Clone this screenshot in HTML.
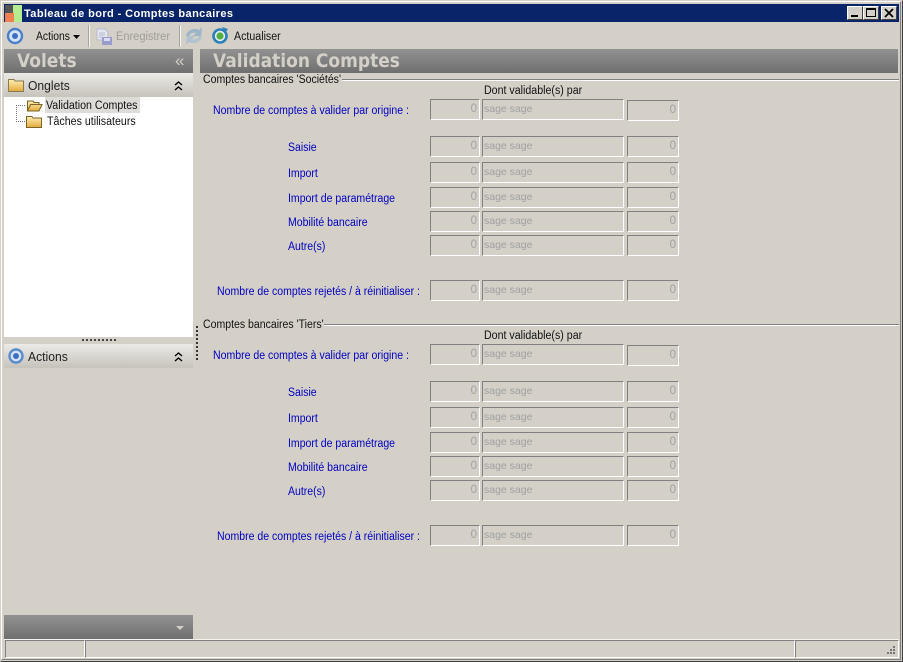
<!DOCTYPE html>
<html><head><meta charset="utf-8"><style>
html,body{margin:0;padding:0;width:903px;height:662px;overflow:hidden;background:#d4d0c8;font-family:"Liberation Sans",sans-serif;font-size:12px}
.a{position:absolute}
.t{position:absolute;white-space:nowrap;line-height:14px;height:14px;transform-origin:0 50%}
.s{transform:scaleX(.925)}
.l{color:#0000c0;font-size:11.5px;transform:scaleX(.915)}
.f{position:absolute;box-sizing:border-box;height:21px;border:1px solid;border-color:#808080 #fff #fff #808080;color:#a0a0a0;font-size:10.5px;line-height:19px;padding:0 2px 0 1px;background:#d4d0c8}
.n{text-align:right;font-size:11.5px}
.h{position:absolute;background:linear-gradient(#929292,#6f6f6f)}
.hd{position:absolute;color:#d4d0c8;font-weight:bold;font-size:19px;line-height:24px;white-space:nowrap;font-family:"DejaVu Sans",sans-serif;transform:scaleX(.897);transform-origin:0 50%}
.p{position:absolute;background:linear-gradient(#eceae6,#c6c3bb)}
.b{position:absolute;top:6px;width:16px;height:14px;box-sizing:border-box;background:#d4d0c8;border:1px solid;border-color:#fff #404040 #404040 #fff}
</style></head><body>
<div class="a" style="left:0;top:0;width:903px;height:662px;box-sizing:border-box;border:1px solid #404040;border-top-color:#d4d0c8;border-left-color:#d4d0c8"></div>
<div class="a" style="left:1px;top:1px;width:900px;height:659px;box-sizing:border-box;border:1px solid #fff;border-right-color:#808080;border-bottom-color:#808080"></div>

<!-- title -->
<div class="a" style="left:4px;top:4px;width:895px;height:18px;background:#0a246a"></div>
<svg class="a" style="left:5px;top:5px" width="17" height="17"><rect width="17" height="17" fill="#555"/><rect x="8" width="9" height="17" fill="#b5ec8f"/><rect y="8" width="9" height="9" fill="#f08050"/></svg>
<div class="t" style="left:24px;top:7px;color:#fff;font-weight:bold;font-size:11px;letter-spacing:0.4px">Tableau de bord - Comptes bancaires</div>
<div class="b" style="left:847px"><div class="a" style="left:3px;bottom:2px;width:7px;height:2px;background:#000"></div></div>
<div class="b" style="left:863px"><div class="a" style="left:2px;top:1px;width:10px;height:9px;box-sizing:border-box;border:1px solid #000;border-top-width:2px"></div></div>
<div class="b" style="left:881px"><svg class="a" style="left:2px;top:1px" width="10" height="10"><path d="M1 1L9 9M9 1L1 9" stroke="#000" stroke-width="1.8"/></svg></div>

<!-- toolbar -->
<svg class="a" style="left:6px;top:27px" width="18" height="18"><circle cx="9" cy="9" r="7" fill="#d8e4f4" stroke="#4a80c8" stroke-width="2.4"/><circle cx="9" cy="9" r="3" fill="#3d6fc0"/></svg>
<div class="t" style="left:36px;top:30px;font-size:11.5px;color:#111;transform:scaleX(.9)">Actions</div>
<svg class="a" style="left:73px;top:35px" width="8" height="5"><path d="M0 0H7L3.5 4Z" fill="#000"/></svg>
<div class="a" style="left:88px;top:25px;width:1px;height:22px;background:#a8a59d"></div><div class="a" style="left:89px;top:25px;width:1px;height:22px;background:#f4f4f4"></div>
<svg class="a" style="left:96px;top:28px" width="17" height="18"><path d="M1 1H9L12 4V12H1Z" fill="#e6e6ee" stroke="#b4bccc"/><path d="M3 5H9M3 7H9M3 9H6" stroke="#b4bccc"/><rect x="6" y="9" width="10" height="8" fill="#9a9ccc"/><rect x="8" y="10" width="6" height="3" fill="#dcdcf0"/></svg>
<div class="t" style="left:116px;top:30px;font-size:11.5px;color:#a09d95;transform:scaleX(.96)">Enregistrer</div>
<div class="a" style="left:179px;top:25px;width:1px;height:22px;background:#a8a59d"></div><div class="a" style="left:180px;top:25px;width:1px;height:22px;background:#f4f4f4"></div>
<svg class="a" style="left:185px;top:26px" width="18" height="20"><path d="M1 10C2 4 9 1 14 4L17 1L16 10H8L11 7C8 6 5 7 4 10Z" fill="#9cb4c8"/><path d="M17 10C16 16 9 19 4 16L1 19L2 10H10L7 13C10 14 13 13 14 10Z" fill="#b0c2d0"/></svg>
<svg class="a" style="left:211px;top:27px" width="18" height="18"><circle cx="9" cy="9" r="6.5" fill="#e8eef4" stroke="#2d7fb8" stroke-width="2.6"/><circle cx="9" cy="9" r="3.6" fill="#4fb03c"/><path d="M11 0L17 2L14 6Z" fill="#2d7fb8"/></svg>
<div class="t s" style="left:234px;top:30px;font-size:11.5px;color:#111">Actualiser</div>

<!-- left panel -->
<div class="h" style="left:4px;top:49px;width:189px;height:24px"></div>
<div class="hd" style="left:17px;top:49px">Volets</div>
<div class="t" style="left:175px;top:54px;color:#d4d0c8;font-size:17px">«</div>

<div class="p" style="left:4px;top:73px;width:189px;height:24px"></div>
<svg class="a" style="left:8px;top:78px" width="16" height="14"><defs><linearGradient id="g" x1="0" y1="0" x2="0" y2="1"><stop offset="0" stop-color="#fff0b4"/><stop offset="1" stop-color="#e2aa3c"/></linearGradient></defs><path d="M.5 13.500V1.500H6L7 3H15.500V13.500Z" fill="url(#g)" stroke="#8a7a50"/></svg>
<div class="t" style="left:28px;top:79px;font-size:12.5px;color:#222;transform:scaleX(.97)">Onglets</div>
<svg class="a" style="left:174px;top:81px" width="9" height="10"><path d="M1 4L4.500 1L8 4M1 9L4.500 6L8 9" fill="none" stroke="#000" stroke-width="1.4"/></svg>

<div class="a" style="left:4px;top:97px;width:189px;height:240px;background:#fff"></div>
<div class="a" style="left:45px;top:97px;width:95px;height:16px;background:#dedcd8"></div>
<div class="a" style="left:16px;top:105px;width:1px;height:16px;background:repeating-linear-gradient(#777 0 1px,transparent 1px 2px)"></div>
<div class="a" style="left:16px;top:105px;width:10px;height:1px;background:repeating-linear-gradient(90deg,#777 0 1px,transparent 1px 2px)"></div>
<div class="a" style="left:16px;top:121px;width:10px;height:1px;background:repeating-linear-gradient(90deg,#777 0 1px,transparent 1px 2px)"></div>
<svg class="a" style="left:26px;top:99px" width="17" height="13"><path d="M1.500 12V2H7L8 3.500H13V5.500H16L13 12Z" fill="url(#g)" stroke="#7a6428"/><path d="M1.500 12L4.500 5.500H16" fill="none" stroke="#7a6428"/></svg>
<svg class="a" style="left:26px;top:115px" width="16" height="13"><path d="M.5 12.500V1.500H6L7 3H15.500V12.500Z" fill="url(#g)" stroke="#7a6428"/></svg>
<div class="t s" style="left:46px;top:99px;font-size:11.5px;color:#111">Validation Comptes</div>
<div class="t s" style="left:47px;top:115px;font-size:11.5px;color:#111">Tâches utilisateurs</div>

<div class="a" style="left:82px;top:339px;width:34px;height:2px;background:repeating-linear-gradient(90deg,#444 0 2px,transparent 2px 4px)"></div>
<div class="p" style="left:4px;top:344px;width:189px;height:24px"></div>
<svg class="a" style="left:7px;top:347px" width="18" height="18"><circle cx="9" cy="9" r="6.500" fill="#d8e4f4" stroke="#5a8ccc" stroke-width="2.400"/><circle cx="9" cy="9" r="3" fill="#3d6fc0"/></svg>
<div class="t" style="left:28px;top:350px;font-size:12.5px;color:#222;transform:scaleX(.97)">Actions</div>
<svg class="a" style="left:174px;top:352px" width="9" height="10"><path d="M1 4L4.500 1L8 4M1 9L4.500 6L8 9" fill="none" stroke="#000" stroke-width="1.4"/></svg>
<div class="a" style="left:196px;top:326px;width:2px;height:36px;background:repeating-linear-gradient(#333 0 2px,transparent 2px 4px)"></div>

<div class="h" style="left:4px;top:615px;width:189px;height:24px"></div>
<svg class="a" style="left:176px;top:626px" width="8" height="5"><path d="M0 0H8L4 4Z" fill="#d4d0c8"/></svg>

<!-- header right -->
<div class="h" style="left:200px;top:49px;width:698px;height:24px"></div>
<div class="hd" style="left:213px;top:49px">Validation Comptes</div>

<!-- section 1 -->
<div class="a" style="left:342px;top:79px;width:557px;height:1px;background:#808080"></div><div class="a" style="left:342px;top:80px;width:557px;height:1px;background:#fff"></div>
<div class="t" style="left:203px;top:73px;font-size:11.5px;color:#111;transform:scaleX(.915)">Comptes bancaires 'Sociétés'</div>
<div class="t s" style="left:484px;top:84px;font-size:11.5px;color:#111">Dont validable(s) par</div>

<div class="t l" style="left:213px;top:104px">Nombre de comptes à valider par origine :</div>
<div class="f n" style="left:430px;top:99px;width:50px">0</div><div class="f" style="left:482px;top:99px;width:142px">sage sage</div><div class="f n" style="left:627px;top:100px;width:52px">0</div>

<div class="t l" style="left:288px;top:141px">Saisie</div>
<div class="f n" style="left:430px;top:136px;width:50px">0</div><div class="f" style="left:482px;top:136px;width:142px">sage sage</div><div class="f n" style="left:627px;top:136px;width:52px">0</div>
<div class="t l" style="left:288px;top:167px">Import</div>
<div class="f n" style="left:430px;top:162px;width:50px">0</div><div class="f" style="left:482px;top:162px;width:142px">sage sage</div><div class="f n" style="left:627px;top:162px;width:52px">0</div>
<div class="t l" style="left:288px;top:192px">Import de paramétrage</div>
<div class="f n" style="left:430px;top:187px;width:50px">0</div><div class="f" style="left:482px;top:187px;width:142px">sage sage</div><div class="f n" style="left:627px;top:187px;width:52px">0</div>
<div class="t l" style="left:288px;top:216px">Mobilité bancaire</div>
<div class="f n" style="left:430px;top:211px;width:50px">0</div><div class="f" style="left:482px;top:211px;width:142px">sage sage</div><div class="f n" style="left:627px;top:211px;width:52px">0</div>
<div class="t l" style="left:288px;top:240px">Autre(s)</div>
<div class="f n" style="left:430px;top:235px;width:50px">0</div><div class="f" style="left:482px;top:235px;width:142px">sage sage</div><div class="f n" style="left:627px;top:235px;width:52px">0</div>
<div class="t l" style="left:217px;top:285px">Nombre de comptes rejetés / à réinitialiser :</div>
<div class="f n" style="left:430px;top:280px;width:50px">0</div><div class="f" style="left:482px;top:280px;width:142px">sage sage</div><div class="f n" style="left:627px;top:280px;width:52px">0</div>

<!-- section 2 -->
<div class="a" style="left:324px;top:324px;width:575px;height:1px;background:#808080"></div><div class="a" style="left:324px;top:325px;width:575px;height:1px;background:#fff"></div>
<div class="t" style="left:203px;top:318px;font-size:11.5px;color:#111;transform:scaleX(.915)">Comptes bancaires 'Tiers'</div>
<div class="t s" style="left:484px;top:329px;font-size:11.5px;color:#111">Dont validable(s) par</div>

<div class="t l" style="left:213px;top:349px">Nombre de comptes à valider par origine :</div>
<div class="f n" style="left:430px;top:344px;width:50px">0</div><div class="f" style="left:482px;top:344px;width:142px">sage sage</div><div class="f n" style="left:627px;top:345px;width:52px">0</div>

<div class="t l" style="left:288px;top:386px">Saisie</div>
<div class="f n" style="left:430px;top:381px;width:50px">0</div><div class="f" style="left:482px;top:381px;width:142px">sage sage</div><div class="f n" style="left:627px;top:381px;width:52px">0</div>
<div class="t l" style="left:288px;top:412px">Import</div>
<div class="f n" style="left:430px;top:407px;width:50px">0</div><div class="f" style="left:482px;top:407px;width:142px">sage sage</div><div class="f n" style="left:627px;top:407px;width:52px">0</div>
<div class="t l" style="left:288px;top:437px">Import de paramétrage</div>
<div class="f n" style="left:430px;top:432px;width:50px">0</div><div class="f" style="left:482px;top:432px;width:142px">sage sage</div><div class="f n" style="left:627px;top:432px;width:52px">0</div>
<div class="t l" style="left:288px;top:461px">Mobilité bancaire</div>
<div class="f n" style="left:430px;top:456px;width:50px">0</div><div class="f" style="left:482px;top:456px;width:142px">sage sage</div><div class="f n" style="left:627px;top:456px;width:52px">0</div>
<div class="t l" style="left:288px;top:485px">Autre(s)</div>
<div class="f n" style="left:430px;top:480px;width:50px">0</div><div class="f" style="left:482px;top:480px;width:142px">sage sage</div><div class="f n" style="left:627px;top:480px;width:52px">0</div>
<div class="t l" style="left:217px;top:530px">Nombre de comptes rejetés / à réinitialiser :</div>
<div class="f n" style="left:430px;top:525px;width:50px">0</div><div class="f" style="left:482px;top:525px;width:142px">sage sage</div><div class="f n" style="left:627px;top:525px;width:52px">0</div>

<!-- status bar -->
<div class="a" style="left:4px;top:639px;width:895px;height:1px;background:#f4f4f0"></div>
<div class="a" style="left:5px;top:640px;width:80px;height:18px;box-sizing:border-box;border:1px solid;border-color:#808080 #fff #fff #808080"></div>
<div class="a" style="left:85px;top:640px;width:710px;height:18px;box-sizing:border-box;border:1px solid;border-color:#808080 #fff #fff #808080"></div>
<div class="a" style="left:795px;top:640px;width:104px;height:18px;box-sizing:border-box;border:1px solid;border-color:#808080 #fff #fff #808080"></div>
<svg class="a" style="left:884px;top:645px" width="12" height="12"><path d="M9 1h2v2h-2zM6 4h2v2h-2zM9 4h2v2h-2zM3 7h2v2h-2zM6 7h2v2h-2zM9 7h2v2h-2z" fill="#777"/></svg>
</body></html>
